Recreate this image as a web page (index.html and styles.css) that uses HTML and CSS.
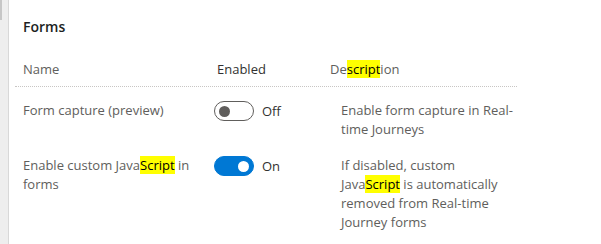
FILE: index.html
```html
<!DOCTYPE html>
<html lang="en">
<head>
  <meta charset="UTF-8">
  <title>Forms settings</title>
  <link rel="stylesheet" href="styles.css">
</head>
<body>
  <div class="rail"><div class="thumb"></div></div>
  <main class="panel">
    <h2>Forms</h2>
    <div class="grid head">
      <div class="c-name">Name</div>
      <div class="c-state">Enabled</div>
      <div class="c-desc">De<mark>script</mark>ion</div>
    </div>
    <div class="rows">
      <div class="grid row">
        <div class="c-name">Form capture (preview)</div>
        <div class="c-state">
          <span class="toggle"><span class="knob"></span></span>
          <span class="state">Off</span>
        </div>
        <div class="c-desc text">Enable form capture in Real-time Journeys</div>
      </div>
      <div class="grid row">
        <div class="c-name">Enable custom Java<mark>Script</mark> in forms</div>
        <div class="c-state">
          <span class="toggle on"><span class="knob"></span></span>
          <span class="state">On</span>
        </div>
        <div class="c-desc text">If disabled, custom Java<mark>Script</mark> is automatically removed from Real-time Journey forms</div>
      </div>
    </div>
  </main>
</body>
</html>
```

FILE: styles.css
```css
body { margin: 0; display: flex; min-height: 244px; background: #fff; font-family: "Open Sans", "Noto Sans", sans-serif; font-size: 13px; color: #605e5c; }
.rail { width: 8px; background: #eeeeee; border-right: 1px solid #d8d8d8; position: relative; }
.thumb { position: absolute; left: 0; top: 0; width: 2px; height: 20px; background: #c6c6c6; }
.panel { flex: 1; padding-left: 14px; }
h2 { margin: 0; padding-top: 17px; font-size: 14px; font-weight: 600; color: #201f1e; line-height: 20px; }
mark { background: #ffff00; color: #000; }
.grid { display: grid; grid-template-columns: 194px 113px 187px; line-height: 19px; }
.head { margin-top: 23px; width: 494px; padding-bottom: 7px; border-bottom: 1px dotted #c8c6c4; margin-left: -8px; padding-left: 8px; }
.rows { padding-top: 6px; }
.row { padding: 8px 0 9px; }
.row .c-name { padding-right: 12px; }
.c-state { display: flex; align-items: flex-start; gap: 8px; color: #323130; }
.text { padding-left: 11px; }
.toggle { width: 30px; height: 18px; border: 1px solid #605e5c; border-radius: 10px; display: flex; align-items: center; padding: 0 4px; margin-left: -3px; }
.toggle .knob { width: 11px; height: 11px; border-radius: 50%; background: #605e5c; }
.toggle.on { background: #0078d4; border-color: #0078d4; justify-content: flex-end; }
.toggle.on .knob { background: #fff; }
.state { line-height: 20px; }
```
